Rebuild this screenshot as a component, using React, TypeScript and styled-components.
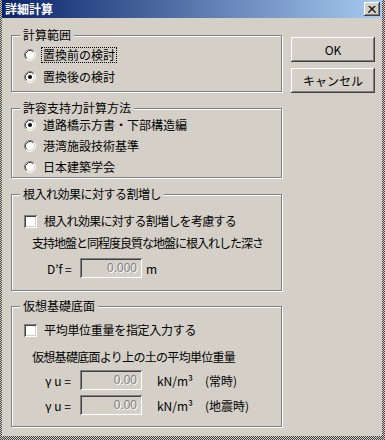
import React from 'react';
import styled, { createGlobalStyle } from 'styled-components';

const Global = createGlobalStyle`
  html, body { margin: 0; padding: 0; background: #d4d0c8; }
  body { font-family: "Noto Sans CJK JP", "Noto Sans", sans-serif; font-size: 12px; color: #000; }
`;

const Frame = styled.div`
  width: 385px;
  height: 440px;
  box-sizing: border-box;
  padding: 0 3px 4px 2px;
  background: repeating-conic-gradient(#404040 0 25%, #d4d0c8 0 50%) 0 0 / 2px 2px;
`;

const Window = styled.div`
  height: 100%;
  display: flex;
  flex-direction: column;
  background: #d4d0c8;
`;

const TitleBar = styled.div`
  height: 18px;
  flex: none;
  display: flex;
  align-items: center;
  justify-content: space-between;
  padding: 0 2px 0 3px;
  background: linear-gradient(to right, #0a246a, #a6caf0);
`;

const Title = styled.span`
  color: #fff;
  font-weight: bold;
  font-size: 12px;
  line-height: 14px;
`;

const CloseButton = styled.div`
  width: 16px;
  height: 14px;
  box-sizing: border-box;
  display: flex;
  align-items: center;
  justify-content: center;
  background: #d4d0c8;
  box-shadow: inset -1px -1px #404040, inset 1px 1px #fff, inset -2px -2px #808080;
`;

const Body = styled.div`
  display: flex;
  gap: 9px;
  padding: 11px 0 0 9px;
`;

const Column = styled.div`
  display: flex;
  flex-direction: column;
  width: 271px;
`;

const Group = styled.fieldset<{ $mt?: number; $pt: number; $pb: number }>`
  margin: ${(p) => p.$mt ?? 0}px 0 0 0;
  padding: ${(p) => p.$pt}px 0 ${(p) => p.$pb}px 0;
  border: 1px solid #808080;
  box-shadow: inset 1px 1px #fff, 1px 1px #fff;
  min-inline-size: 0;
  display: flex;
  flex-direction: column;
`;

const Legend = styled.legend<{ $ls?: number }>`
  margin-left: 8px;
  padding: 0 3px;
  line-height: 12px;
  letter-spacing: ${(p) => p.$ls ?? 0}px;
  background: #d4d0c8;
`;

const Row = styled.div<{ $mt?: number; $pl?: number; $ls?: number }>`
  height: 20px;
  display: flex;
  align-items: center;
  margin-top: ${(p) => p.$mt ?? 0}px;
  padding-left: ${(p) => p.$pl ?? 12}px;
  letter-spacing: ${(p) => p.$ls ?? 0}px;
  white-space: nowrap;
`;

const OptionText = styled.span<{ $focus?: boolean }>`
  margin-left: 5px;
  padding: 0 1px;
  line-height: 14px;
  border: 1px dotted ${(p) => (p.$focus ? '#000' : 'transparent')};
`;

const CheckBox = styled.span`
  width: 13px;
  height: 13px;
  flex: none;
  box-sizing: border-box;
  background: #fff;
  box-shadow: inset 1px 1px #808080, inset -1px -1px #fff, inset 2px 2px #404040, inset -2px -2px #d4d0c8;
`;

const FieldLabel = styled.span<{ $w: number }>`
  width: ${(p) => p.$w}px;
`;

const Input = styled.div`
  width: 62px;
  height: 20px;
  box-sizing: border-box;
  display: flex;
  align-items: center;
  justify-content: flex-end;
  padding-right: 5px;
  color: #808080;
  text-shadow: 1px 1px #fff;
  font-family: "Liberation Sans", sans-serif;
  box-shadow: inset 1px 1px #808080, inset -1px -1px #fff, inset 2px 2px #404040, inset -2px -2px #d4d0c8;
`;

const Unit = styled.span<{ $ml: number }>`
  margin-left: ${(p) => p.$ml}px;
`;

const Buttons = styled.div`
  display: flex;
  flex-direction: column;
  gap: 6px;
  padding-top: 8px;
`;

const Button = styled.div`
  width: 84px;
  height: 25px;
  display: flex;
  align-items: center;
  justify-content: center;
  box-shadow: inset -1px -1px #404040, inset 1px 1px #fff, inset -2px -2px #808080;
`;

const Radio = ({ checked }: { checked?: boolean }) => (
  <svg width="12" height="12" viewBox="0 0 12 12" style={{ flex: 'none' }}>
    <circle cx="6" cy="6" r="5" fill="#fff" />
    <path d="M2.11 9.89 A5.5 5.5 0 0 1 9.89 2.11" stroke="#808080" fill="none" />
    <path d="M9.89 2.11 A5.5 5.5 0 0 1 2.11 9.89" stroke="#fff" fill="none" />
    <path d="M2.82 9.18 A4.5 4.5 0 0 1 9.18 2.82" stroke="#404040" fill="none" />
    <path d="M9.18 2.82 A4.5 4.5 0 0 1 2.82 9.18" stroke="#d4d0c8" fill="none" />
    {checked && <circle cx="6" cy="6" r="2" fill="#000" />}
  </svg>
);

export default function App() {
  return (
    <Frame>
      <Global />
      <Window>
        <TitleBar>
          <Title>詳細計算</Title>
          <CloseButton>
            <svg width="8" height="7" viewBox="0 0 8 7">
              <path d="M0.5 0 L7.5 7 M1.5 0 L8 6.5 M7.5 0 L0.5 7 M6.5 0 L0 6.5" stroke="#000" strokeWidth="1" />
            </svg>
          </CloseButton>
        </TitleBar>
        <Body>
          <Column>
            <Group $pt={4} $pb={4}>
              <Legend>計算範囲</Legend>
              <Row>
                <Radio />
                <OptionText $focus>置換前の検討</OptionText>
              </Row>
              <Row $mt={2}>
                <Radio checked />
                <OptionText>置換後の検討</OptionText>
              </Row>
            </Group>
            <Group $mt={10} $pt={1} $pb={0}>
              <Legend>許容支持力計算方法</Legend>
              <Row>
                <Radio checked />
                <OptionText>道路橋示方書・下部構造編</OptionText>
              </Row>
              <Row $mt={1}>
                <Radio />
                <OptionText>港湾施設技術基準</OptionText>
              </Row>
              <Row $mt={1}>
                <Radio />
                <OptionText>日本建築学会</OptionText>
              </Row>
            </Group>
            <Group $mt={10} $pt={11} $pb={12}>
              <Legend $ls={-0.5}>根入れ効果に対する割増し</Legend>
              <Row $ls={-0.7}>
                <CheckBox />
                <OptionText>根入れ効果に対する割増しを考慮する</OptionText>
              </Row>
              <Row $mt={1} $pl={20} $ls={-1}>支持地盤と同程度良質な地盤に根入れした深さ</Row>
              <Row $mt={6} $pl={35}>
                <FieldLabel $w={33}>D’f =</FieldLabel>
                <Input>0.000</Input>
                <Unit $ml={4}>m</Unit>
              </Row>
            </Group>
            <Group $mt={9} $pt={8} $pb={11}>
              <Legend>仮想基礎底面</Legend>
              <Row $ls={-0.3}>
                <CheckBox />
                <OptionText>平均単位重量を指定入力する</OptionText>
              </Row>
              <Row $mt={6} $pl={20} $ls={-0.7}>仮想基礎底面より上の土の平均単位重量</Row>
              <Row $mt={4} $pl={33}>
                <FieldLabel $w={35}>γ u =</FieldLabel>
                <Input>0.00</Input>
                <Unit $ml={15}>kN/m³</Unit>
                <Unit $ml={12}>(常時)</Unit>
              </Row>
              <Row $mt={5} $pl={33}>
                <FieldLabel $w={35}>γ u =</FieldLabel>
                <Input>0.00</Input>
                <Unit $ml={15}>kN/m³</Unit>
                <Unit $ml={12}>(地震時)</Unit>
              </Row>
            </Group>
          </Column>
          <Buttons>
            <Button>OK</Button>
            <Button>キャンセル</Button>
          </Buttons>
        </Body>
      </Window>
    </Frame>
  );
}
